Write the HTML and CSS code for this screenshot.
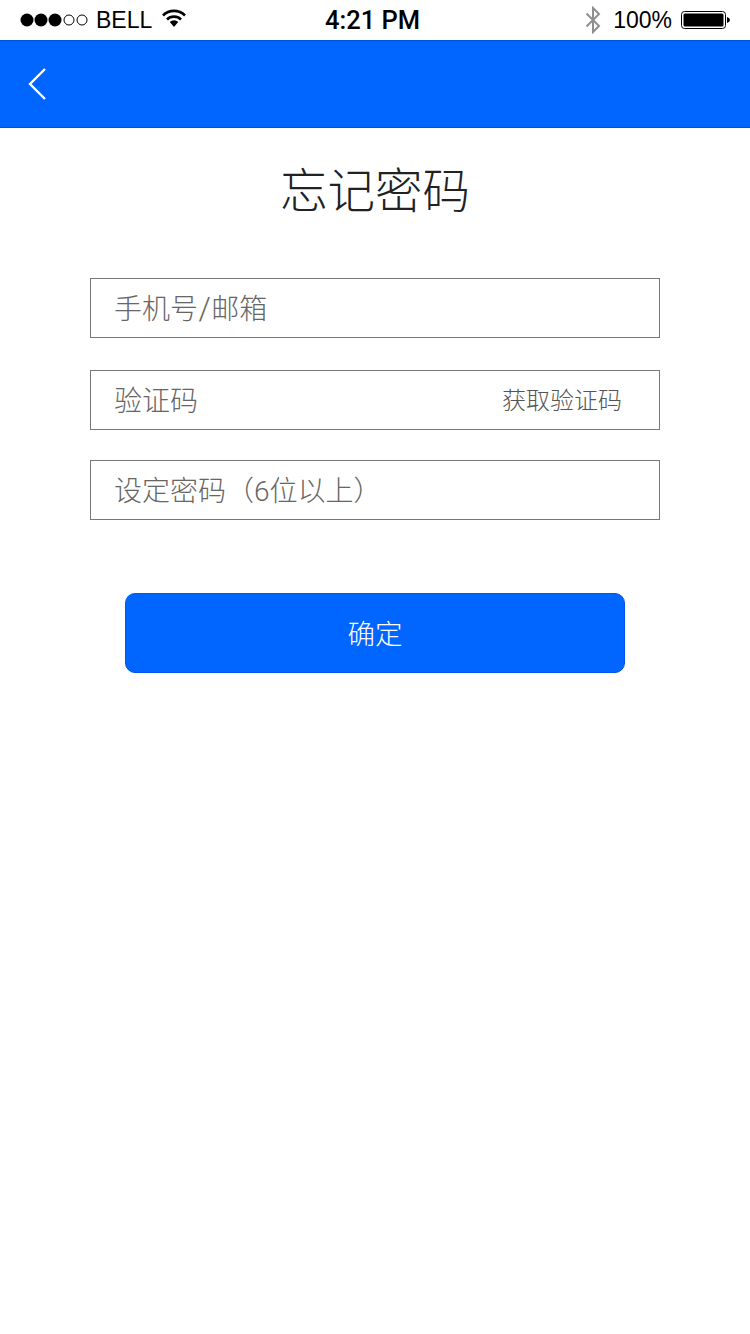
FILE: index.html
```html
<!DOCTYPE html>
<html lang="zh-CN">
<head>
    <meta charset="UTF-8">
    <meta name="viewport" content="width=device-width, initial-scale=1.0">
    <title>忘记密码</title>
    <link rel="stylesheet" href="styles.css">
</head>
<body>

    <div class="status-bar">
        <div class="status-left">
            <svg class="signal" width="68" height="14" viewBox="0 0 68 14">
                <circle cx="7" cy="7" r="6.5" fill="#000"/>
                <circle cx="21" cy="7" r="6.5" fill="#000"/>
                <circle cx="35" cy="7" r="6.5" fill="#000"/>
                <circle cx="49" cy="7" r="5" fill="none" stroke="#000" stroke-width="1"/>
                <circle cx="62" cy="7" r="5" fill="none" stroke="#000" stroke-width="1"/>
            </svg>
            <span class="carrier">BELL</span>
            <svg class="wifi" width="24" height="18" viewBox="0 0 24 18">
                <path d="M1 6.5 A15.5 15.5 0 0 1 23 6.5" fill="none" stroke="#000" stroke-width="2.6"/>
                <path d="M5 10.5 A10 10 0 0 1 19 10.5" fill="none" stroke="#000" stroke-width="2.6"/>
                <path d="M7.8 13 A6 6 0 0 1 16.2 13 L12 18 Z" fill="#000"/>
            </svg>
        </div>
        <div class="status-time">4:21 PM</div>
        <div class="status-right">
            <svg class="bluetooth" width="16" height="28" viewBox="0 0 16 28">
                <path d="M1.5 7.5 L14 20 L8 26 L8 2 L14 8 L1.5 20.5" fill="none" stroke="#8e8e8e" stroke-width="2"/>
            </svg>
            <span class="battery-text">100%</span>
            <svg class="battery" width="49" height="20" viewBox="0 0 49 20">
                <rect x="0.5" y="1.5" width="44" height="17" rx="3" fill="#fff" stroke="#000" stroke-width="1"/>
                <rect x="2.5" y="3.5" width="40" height="13" rx="1.5" fill="#000"/>
                <path d="M46 7 Q49 8 49 10 Q49 12 46 13 Z" fill="#000"/>
            </svg>
        </div>
    </div>

    <div class="nav-bar">
        <svg class="back" width="20" height="34" viewBox="0 0 20 34">
            <path d="M18 2 L3 17 L18 32" fill="none" stroke="#fff" stroke-width="2.4"/>
        </svg>
    </div>

    <h2 class="page-title">忘记密码</h2>

    <form class="reset-form">
        <div class="field"><span class="field-label">手机号<span class="slash">/</span>邮箱</span></div>
        <div class="field field-code">
            <span class="field-label">验证码</span>
            <span class="get-code">获取验证码</span>
        </div>
        <div class="field field-password"><span class="field-label">设定密码（6位以上）</span></div>
        <button type="button" class="submit-btn">确定</button>
    </form>

</body>
</html>
```

FILE: styles.css
```css
* {
    box-sizing: border-box;
}

body {
    margin: 0;
    background-color: #fff;
    font-family: "Liberation Sans", "Noto Sans CJK SC", sans-serif;
}

.status-bar {
    height: 40px;
    display: flex;
    align-items: center;
    justify-content: space-between;
    padding: 0 20px;
    position: relative;
    color: #000;
    font-size: 23px;
}

.status-left,
.status-right {
    display: flex;
    align-items: center;
}

.carrier {
    margin-left: 8px;
}

.wifi {
    margin-left: 10px;
    margin-top: -4px;
}

.status-time {
    position: absolute;
    left: 325px;
    top: 5px;
    font-family: Roboto, sans-serif;
    font-size: 25.5px;
    font-weight: 500;
    line-height: 30px;
}

.battery-text {
    margin-left: 12px;
}

.battery {
    margin-left: 9px;
}

.nav-bar {
    height: 88px;
    background-color: #0066ff;
    border-top: 1px solid #0050e0;
    border-bottom: 1px solid #0050e0;
    display: flex;
    align-items: center;
    padding-left: 27px;
}

.page-title {
    margin: 0;
    padding-top: 33px;
    height: 150px;
    text-align: center;
    font-size: 47.5px;
    line-height: 62px;
    font-weight: 300;
    color: #222;
}

.reset-form {
    display: flex;
    flex-direction: column;
    align-items: center;
}

.field {
    width: 570px;
    height: 60px;
    border: 1px solid #777;
    display: flex;
    align-items: center;
    justify-content: space-between;
    padding: 0 37px 4px 23px;
    margin-bottom: 32px;
}

.field-code {
    margin-bottom: 30px;
}

.field-password {
    margin-bottom: 73px;
}

.field-label {
    margin-top: 8px;
    font-family: Roboto, "Noto Sans CJK SC", sans-serif;
    font-size: 28px;
    line-height: 36px;
    font-weight: 300;
    color: #666;
}

.slash {
    font-size: 31px;
    line-height: 1;
    margin: 0 0.5px;
}

.get-code {
    font-size: 24px;
    font-weight: 300;
    color: #555;
}

.submit-btn {
    width: 500px;
    height: 80px;
    border: 1px solid #0055f0;
    border-radius: 10px;
    padding-bottom: 4px;
    background-color: #0066ff;
    color: #fff;
    font-family: inherit;
    font-size: 27.5px;
    font-weight: 300;
}
```
